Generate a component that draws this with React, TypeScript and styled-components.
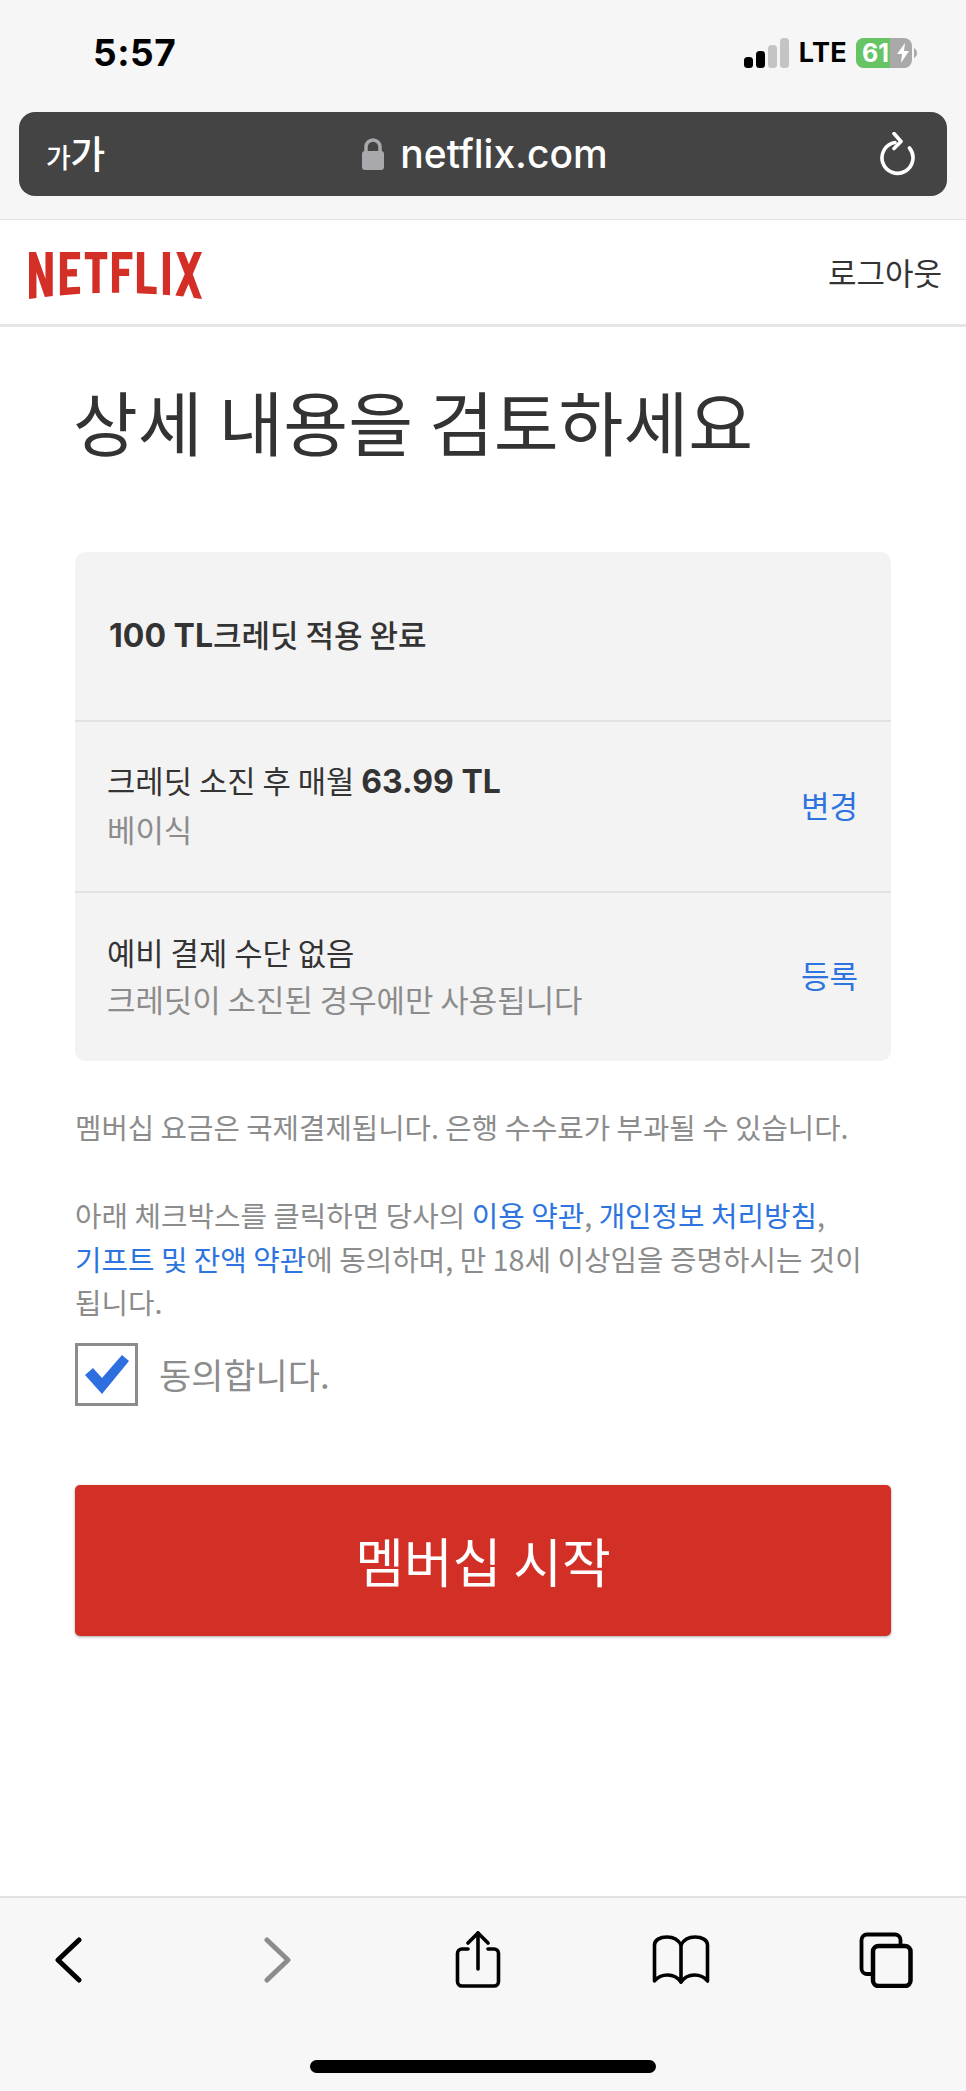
import React from "react";
import styled, { createGlobalStyle } from "styled-components";

const Global = createGlobalStyle`
  html, body { margin: 0; padding: 0; background: #fff; }
  * { box-sizing: border-box; }
  body { font-family: Inter, "Noto Sans CJK KR", sans-serif; }
`;
const KR = `"Noto Sans CJK KR", "Noto Sans", sans-serif`;
const LAT = `Inter, "Noto Sans CJK KR", sans-serif`;

const Page = styled.div`
  width: 966px; height: 2091px; display: flex; flex-direction: column; overflow: hidden; background: #fff;
`;
const Chrome = styled.div`
  height: 220px; background: #f6f6f6; border-bottom: 1px solid #e4e4e4; flex: none;
  display: flex; flex-direction: column; padding: 0 19px;
`;
const StatusBar = styled.div`
  height: 112px; display: flex; align-items: flex-start; justify-content: space-between;
  padding: 33px 0 0 74px;
`;
const Clock = styled.div`
  font: 700 37px/40px ${LAT}; color: #000; letter-spacing: 0.5px;
`;
const StatusRight = styled.div`
  display: flex; align-items: center; gap: 9px; padding: 4px 0 0; margin-right: 30px; height: 36px;
`;
const Lte = styled.span`
  font: 700 27px/30px ${LAT}; color: #000; letter-spacing: 0.3px;
`;
const BatteryWrap = styled.div`
  display: flex; align-items: center; gap: 2px;
`;
const Battery = styled.div`
  position: relative; width: 56px; height: 30px; border-radius: 8px; overflow: hidden; background: #a9a9a9; display: flex;
  align-items: center;
`;
const BatteryFill = styled.div`
  position: absolute; left: 0; top: 0; bottom: 0; background: #67c465;
`;
const BatteryText = styled.span`
  position: relative; font: 700 25px/30px ${LAT}; color: #fff; padding-left: 6px;
`;
const BatteryBolt = styled.svg`
  position: absolute; left: 41px; top: 5px;
`;
const UrlBar = styled.div`
  height: 84px; border-radius: 16px; background: #444444; position: relative;
  display: flex; align-items: center; justify-content: space-between; padding: 0 32px 0 27px;
`;
const TextSize = styled.div`
  font: 500 38px/46px ${KR}; color: #fff; display: flex; align-items: baseline; letter-spacing: -0.5px;
`;
const SmallGa = styled.span`
  font-size: 27px;
`;
const UrlCenter = styled.div`
  position: absolute; left: 0; right: 0; top: 0; bottom: 0; display: flex; align-items: center; justify-content: center; gap: 15px;
  padding-left: 3px;
`;
const UrlText = styled.span`
  font: 500 39px/44px ${LAT}; color: #fff;
`;
const Header = styled.header`
  height: 107px; flex: none; background: #fff; border-bottom: 3px solid #e6e6e6;
  display: flex; align-items: center; justify-content: space-between; padding: 0 24px 0 29px;
`;
const Logo = styled.svg`
  width: 173px; height: 47px; display: block; margin-top: 7px;
`;
const Logout = styled.a`
  font: 400 31px/40px ${KR}; color: #333;
`;
const Main = styled.main`
  flex: 1; padding: 0 75px; display: flex; flex-direction: column; min-height: 0;
`;
const Title = styled.h1`
  margin: 48px 0 0 -2px; font: 400 70.5px/90px ${KR}; color: #333; letter-spacing: 0; white-space: nowrap;
`;
const Card = styled.section`
  margin-top: 87px; background: #f3f3f3; border-radius: 10px; display: flex; flex-direction: column; height: 509px; flex: none;
`;
const Row = styled.div<{ $first?: boolean }>`
  flex: 1; display: flex; align-items: center; justify-content: space-between; padding: 0 33px 4px 32px;
  border-top: ${(p) => (p.$first ? "none" : "2px solid #e2e2e2")};
`;
const RowBody = styled.div`
  display: flex; flex-direction: column; gap: 2px;
`;
const RowTitle = styled.div`
  font: 400 30.8px/45px ${KR}; color: #333; white-space: nowrap;
`;
const RowCredit = styled(RowTitle)`
  font-weight: 500; font-size: 31px; padding-left: 2px;
`;
const Bold = styled.b`
  font-family: ${LAT}; font-weight: 700; font-size: 32px;
`;
const RowSub = styled.div`
  font: 400 30.9px/45px ${KR}; color: #8c8c8c; white-space: nowrap;
`;
const RowAction = styled.a`
  font: 400 31px/45px ${KR}; color: #2e74e0;
`;
const Notice = styled.p`
  margin: 44px 0 0; font: 400 28.7px/44px ${KR}; color: #8c8c8c; white-space: nowrap;
`;
const Terms = styled.p`
  margin: 44px 0 0; font: 400 28.8px/43.5px ${KR}; color: #8c8c8c; white-space: nowrap;
`;
const TermLink = styled.a`
  color: #2e74e0;
`;
const Agree = styled.label`
  margin-top: 19px; display: flex; align-items: center; gap: 21px;
`;
const CheckBox = styled.span`
  width: 63px; height: 63px; border: 3px solid #8c8c8c; background: #fff; display: flex; align-items: center; justify-content: center; flex: none;
`;
const AgreeText = styled.span`
  font: 400 35px/50px ${KR}; color: #8c8c8c;
`;
const StartButton = styled.button`
  margin-top: 79px; height: 151px; width: 100%; flex: none; border: 0; border-radius: 5px; background: #d22f27;
  color: #fff; font: 400 53px/70px ${KR}; box-shadow: 0 1px 3px rgba(0,0,0,.35);
`;
const Toolbar = styled.nav`
  height: 195px; flex: none; background: #f7f7f7; border-top: 2px solid #e2e2e2;
  display: flex; flex-direction: column; align-items: center;
`;
const ToolIcons = styled.div`
  width: 100%; height: 162px; padding-bottom: 38px; display: grid; flex: none;
  grid-template-columns: 136px 282px 120px 286px 124px; justify-items: center; align-items: center;
`;
const HomeBar = styled.div`
  width: 346px; height: 13px; border-radius: 7px; background: #000; flex: none;
`;

const NETFLIX = "M105.06233,14.2806261 L110.999156,30 C109.249227,29.7497422 107.500234,29.4366857 105.718437,29.1554972 L102.374168,20.4686475 L98.9371075,28.4375293 C97.2499766,28.1563408 95.5928391,28.061674 93.9057081,27.8432843 L99.9372012,14.0931671 L94.4680851,0 L99.5313525,0 L102.593495,7.87421502 L105.874965,0 L110.999156,0 L105.06233,14.2806261 Z M90.4686475,0 L85.8749649,0 L85.8749649,27.2499766 C87.3746368,27.3437061 88.9371075,27.4055675 90.4686475,27.5930265 L90.4686475,0 Z M81.9055207,26.93692 C77.7186241,26.6557316 73.5307901,26.4064111 69.250164,26.3117443 L69.250164,0 L73.9366389,0 L73.9366389,21.8745899 C76.6248008,21.9373887 79.3120255,22.1557784 81.9055207,22.2804387 L81.9055207,26.93692 Z M64.2496954,10.6561065 L64.2496954,15.3435186 L57.8442216,15.3435186 L57.8442216,25.9996251 L53.2186709,25.9996251 L53.2186709,0 L66.3436123,0 L66.3436123,4.68741213 L57.8442216,4.68741213 L57.8442216,10.6561065 L64.2496954,10.6561065 Z M45.3435186,4.68741213 L45.3435186,26.2498828 C43.7810479,26.2498828 42.1876465,26.2498828 40.6561065,26.3117443 L40.6561065,4.68741213 L35.8121661,4.68741213 L35.8121661,0 L50.2183897,0 L50.2183897,4.68741213 L45.3435186,4.68741213 Z M30.749836,15.5928391 C28.687787,15.5928391 26.2498828,15.5928391 24.4999531,15.6875059 L24.4999531,22.6562939 C27.2499766,22.4678976 30,22.2495079 32.7809542,22.1557784 L32.7809542,26.6557316 L19.812541,27.6876933 L19.812541,0 L32.7809542,0 L32.7809542,4.68741213 L24.4999531,4.68741213 L24.4999531,10.9991564 C26.3126816,10.9991564 29.0936358,10.9054269 30.749836,10.9054269 L30.749836,15.5928391 Z M4.78114163,12.9684132 L4.78114163,29.3429562 C3.09401069,29.5313525 1.59340144,29.7497422 0,30 L0,0 L4.4690224,0 L10.562377,17.0315868 L10.562377,0 L15.2497891,0 L15.2497891,28.061674 C13.5935889,28.3437998 11.906458,28.4375293 10.1246602,28.6868498 L4.78114163,12.9684132 Z";

const Signal = () => (
  <svg width="46" height="30" viewBox="0 0 46 30">
    <rect x="0" y="19" width="9" height="11" rx="3.5" fill="#000" />
    <rect x="12" y="13" width="9" height="17" rx="3.5" fill="#000" />
    <rect x="24" y="7" width="9" height="23" rx="3.5" fill="#c4c4c4" />
    <rect x="36" y="0" width="9" height="30" rx="3.5" fill="#c4c4c4" />
  </svg>
);

const Lock = () => (
  <svg width="24" height="32" viewBox="0 0 24 32">
    <path d="M5 14V9a7 7 0 0 1 14 0v5" fill="none" stroke="#a8a8ad" strokeWidth="3.5" />
    <rect x="1" y="13" width="22" height="19" rx="3" fill="#a8a8ad" />
  </svg>
);

const Reload = () => (
  <svg width="36" height="44" viewBox="0 0 36 44" fill="none" stroke="#fff" strokeWidth="3.6" strokeLinecap="round" strokeLinejoin="round">
    <path d="M16 10.500A15.500 15.500 0 1 0 30.500 16" />
    <path d="M15 1.500l7 8-7 7" />
  </svg>
);

const Back = ({ color }: { color: string }) => (
  <svg width="27" height="46" viewBox="0 0 27 46" fill="none" stroke={color} strokeWidth="5" strokeLinecap="round" strokeLinejoin="round">
    <path d="M24 3L3 23l21 20" />
  </svg>
);

const Forward = ({ color }: { color: string }) => (
  <svg width="27" height="46" viewBox="0 0 27 46" fill="none" stroke={color} strokeWidth="5" strokeLinecap="round" strokeLinejoin="round">
    <path d="M3 3l21 20L3 43" />
  </svg>
);

const Share = () => (
  <svg width="46" height="58" viewBox="0 0 46 58" fill="none" stroke="#000" strokeWidth="3.6" strokeLinecap="round" strokeLinejoin="round">
    <path d="M13 18H7a4.500 4.500 0 0 0-4.500 4.500v28A4.500 4.500 0 0 0 7 55h32a4.500 4.500 0 0 0 4.500-4.500v-28A4.500 4.500 0 0 0 39 18h-6" />
    <path d="M23 38V2" />
    <path d="M13 12L23 2l10 10" />
  </svg>
);

const Book = () => (
  <svg width="58" height="50" viewBox="0 0 58 50" fill="none" stroke="#000" strokeWidth="3.6" strokeLinecap="round" strokeLinejoin="round">
    <path d="M29 10C26 4 21 2 15 2 8 2 2.500 5 2.500 10v36c4-5 8-6 13-6 6 0 10 2 13.500 7 3.500-5 7.500-7 13.500-7 5 0 9 1 13 6V10c0-5-5.500-8-12.500-8-6 0-11 2-14 8z" />
    <path d="M29 10v37" />
  </svg>
);

const Tabs = () => (
  <svg width="54" height="56" viewBox="0 0 54 56" fill="none" stroke="#000" strokeWidth="3.8" strokeLinejoin="round">
    <path d="M14 42H8a5.500 5.500 0 0 1-5.500-5.500V8A5.500 5.500 0 0 1 8 2.500h28A5.500 5.500 0 0 1 41.500 8v5" />
    <rect x="14" y="14" width="37.500" height="40" rx="5.500" strokeWidth="4.500" />
  </svg>
);

export default function App() {
  return (
    <Page>
      <Global />
      <Chrome>
        <StatusBar>
          <Clock>5:57</Clock>
          <StatusRight>
            <Signal />
            <Lte>LTE</Lte>
            <BatteryWrap>
              <Battery>
                <BatteryFill style={{ width: "61%" }} />
                <BatteryText>61</BatteryText>
                <BatteryBolt width="13" height="20" viewBox="0 0 13 20"><path d="M8 0L0 11h5l-1 9 8-12H7z" fill="#fff" /></BatteryBolt>
              </Battery>
              <svg width="3" height="10" viewBox="0 0 3 10"><path d="M0 0c2 1 3 3 3 5s-1 4-3 5z" fill="#a9a9a9" /></svg>
            </BatteryWrap>
          </StatusRight>
        </StatusBar>
        <UrlBar>
          <TextSize><SmallGa>가</SmallGa>가</TextSize>
          <UrlCenter><Lock /><UrlText>netflix.com</UrlText></UrlCenter>
          <Reload />
        </UrlBar>
      </Chrome>
      <Header>
        <Logo viewBox="0 0 111 30" preserveAspectRatio="none"><path d={NETFLIX} fill="#d32f27" /></Logo>
        <Logout>로그아웃</Logout>
      </Header>
      <Main>
        <Title>상세 내용을 검토하세요</Title>
        <Card>
          <Row $first>
            <RowCredit><Bold>100 TL</Bold>크레딧 적용 완료</RowCredit>
          </Row>
          <Row>
            <RowBody>
              <RowTitle>크레딧 소진 후 매월 <Bold>63.99 TL</Bold></RowTitle>
              <RowSub>베이식</RowSub>
            </RowBody>
            <RowAction>변경</RowAction>
          </Row>
          <Row>
            <RowBody>
              <RowTitle>예비 결제 수단 없음</RowTitle>
              <RowSub>크레딧이 소진된 경우에만 사용됩니다</RowSub>
            </RowBody>
            <RowAction>등록</RowAction>
          </Row>
        </Card>
        <Notice>멤버십 요금은 국제결제됩니다. 은행 수수료가 부과될 수 있습니다.</Notice>
        <Terms>
          아래 체크박스를 클릭하면 당사의 <TermLink>이용 약관</TermLink>, <TermLink>개인정보 처리방침</TermLink>,<br />
          <TermLink>기프트 및 잔액 약관</TermLink>에 동의하며, 만 18세 이상임을 증명하시는 것이<br />
          됩니다.
        </Terms>
        <Agree>
          <CheckBox>
            <svg width="46" height="40" viewBox="0 0 46 40"><path d="M1 21l8-7 9 10L38 1l7 6-27 33z" fill="#2e6fdf" /></svg>
          </CheckBox>
          <AgreeText>동의합니다.</AgreeText>
        </Agree>
        <StartButton>멤버십 시작</StartButton>
      </Main>
      <Toolbar>
        <ToolIcons>
          <Back color="#000" />
          <Forward color="#8c8c8c" />
          <Share />
          <Book />
          <Tabs />
        </ToolIcons>
        <HomeBar />
      </Toolbar>
    </Page>
  );
}
